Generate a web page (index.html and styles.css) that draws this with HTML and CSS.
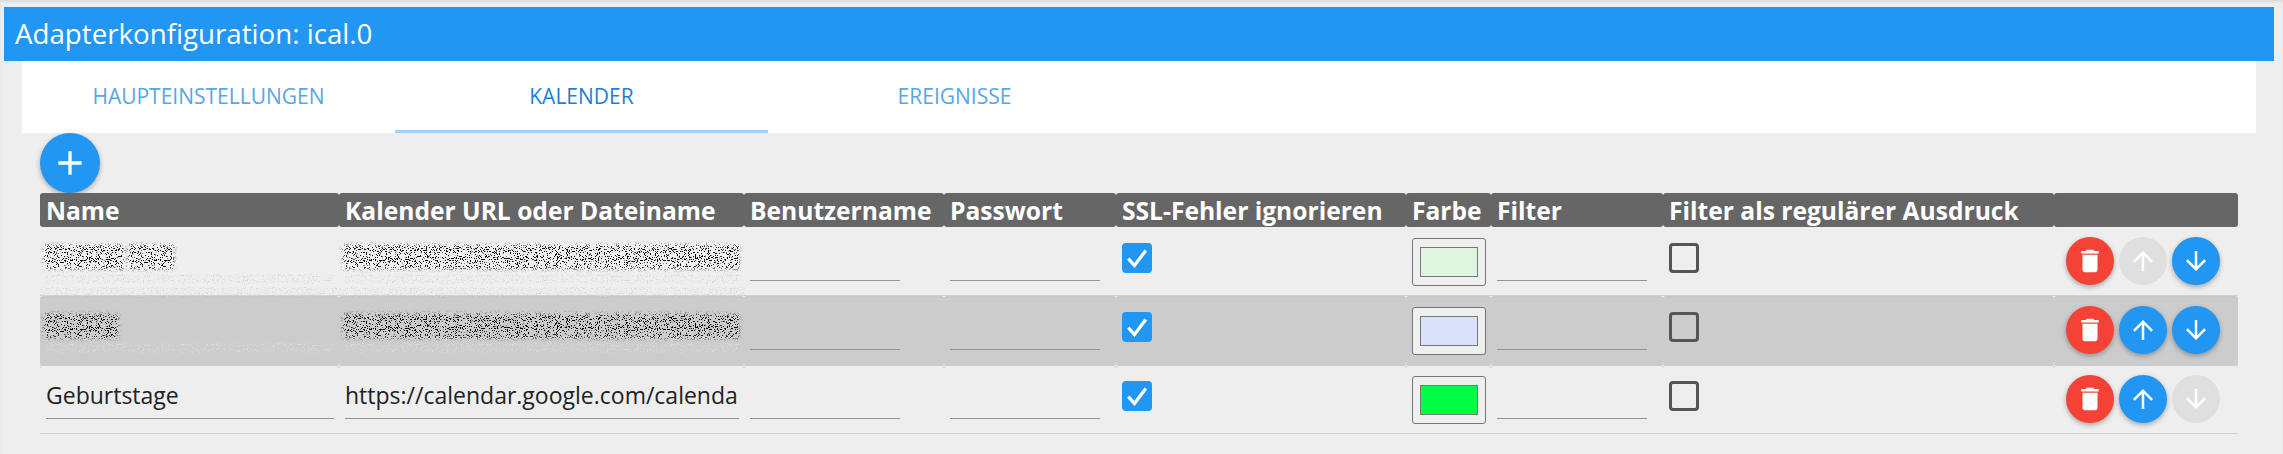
FILE: index.html
```html
<!DOCTYPE html>
<html lang="de">
<head>
  <meta charset="UTF-8">
  <title>Adapterkonfiguration: ical.0</title>
  <link rel="stylesheet" href="styles.css">
</head>
<body>
  <!-- speckle used for the censored cells -->
  <svg class="defs" width="0" height="0">
    <filter id="speckle" x="-5%" y="-20%" width="110%" height="140%">
      <feTurbulence type="fractalNoise" baseFrequency="0.9" numOctaves="2" seed="4" result="noise"/>
      <feColorMatrix in="noise" type="matrix" values="0 0 0 0 0  0 0 0 0 0  0 0 0 0 0  14 14 14 0 -23" result="dots"/>
      <feGaussianBlur in="SourceAlpha" stdDeviation="2" result="blob"/>
      <feComposite in="dots" in2="blob" operator="in"/>
    </filter>
    <filter id="speckle-light" x="-2%" y="-20%" width="104%" height="140%">
      <feTurbulence type="fractalNoise" baseFrequency="0.8" numOctaves="1" seed="9" result="noise"/>
      <feColorMatrix in="noise" type="matrix" values="0 0 0 0 0.7  0 0 0 0 0.7  0 0 0 0 0.7  5 5 5 0 -8" result="dots"/>
      <feComposite in="dots" in2="SourceAlpha" operator="in"/>
    </filter>
  </svg>

  <header class="title-bar">Adapterkonfiguration: ical.0</header>

  <nav class="tabs">
    <a class="tab">Haupteinstellungen</a>
    <a class="tab active">Kalender</a>
    <a class="tab">Ereignisse</a>
  </nav>

  <main class="content">
    <button class="fab add">
      <svg viewBox="0 0 24 24"><path d="M19 13h-6v6h-2v-6H5v-2h6V5h2v6h6v2z"/></svg>
    </button>

    <table class="calendars">
      <colgroup>
        <col class="c-name"><col class="c-url"><col class="c-user"><col class="c-pass"><col class="c-ssl">
        <col class="c-color"><col class="c-filter"><col class="c-regex"><col class="c-actions">
      </colgroup>
      <thead>
        <tr>
          <th>Name</th>
          <th>Kalender URL oder Dateiname</th>
          <th>Benutzername</th>
          <th>Passwort</th>
          <th>SSL-Fehler ignorieren</th>
          <th>Farbe</th>
          <th>Filter</th>
          <th>Filter als regulärer Ausdruck</th>
          <th></th>
        </tr>
      </thead>
      <tbody>
        <tr>
          <td><div class="field censored band"><span class="smudge w-name1a"></span><span class="smudge w-name1b"></span></div></td>
          <td><div class="field censored band"><span class="smudge w-url"></span></div></td>
          <td><div class="field short"></div></td>
          <td><div class="field short"></div></td>
          <td><span class="check on"><svg viewBox="0 0 24 24"><path d="M5 12.500l5 5.500 9-12"/></svg></span></td>
          <td><span class="color"><span class="swatch light-green"></span></span></td>
          <td><div class="field short"></div></td>
          <td><span class="check"></span></td>
          <td>
            <div class="actions">
              <button class="fab small red"><svg viewBox="0 0 24 24"><path d="M6 19c0 1.100.9 2 2 2h8c1.100 0 2-.9 2-2V7H6v12zM19 4h-3.500l-1-1h-5l-1 1H5v2h14V4z"/></svg></button>
              <button class="fab small off"><svg viewBox="0 0 24 24"><path d="M4 12l1.410 1.410L11 7.830V20h2V7.830l5.580 5.590L20 12l-8-8-8 8z"/></svg></button>
              <button class="fab small"><svg viewBox="0 0 24 24"><path d="M20 12l-1.410-1.410L13 16.170V4h-2v12.170l-5.580-5.590L4 12l8 8 8-8z"/></svg></button>
            </div>
          </td>
        </tr>
        <tr class="striped">
          <td><div class="field censored"><span class="smudge w-name2"></span></div></td>
          <td><div class="field censored"><span class="smudge w-url"></span></div></td>
          <td><div class="field short"></div></td>
          <td><div class="field short"></div></td>
          <td><span class="check on"><svg viewBox="0 0 24 24"><path d="M5 12.500l5 5.500 9-12"/></svg></span></td>
          <td><span class="color"><span class="swatch light-blue"></span></span></td>
          <td><div class="field short"></div></td>
          <td><span class="check"></span></td>
          <td>
            <div class="actions">
              <button class="fab small red"><svg viewBox="0 0 24 24"><path d="M6 19c0 1.100.9 2 2 2h8c1.100 0 2-.9 2-2V7H6v12zM19 4h-3.500l-1-1h-5l-1 1H5v2h14V4z"/></svg></button>
              <button class="fab small"><svg viewBox="0 0 24 24"><path d="M4 12l1.410 1.410L11 7.830V20h2V7.830l5.580 5.590L20 12l-8-8-8 8z"/></svg></button>
              <button class="fab small"><svg viewBox="0 0 24 24"><path d="M20 12l-1.410-1.410L13 16.170V4h-2v12.170l-5.580-5.590L4 12l8 8 8-8z"/></svg></button>
            </div>
          </td>
        </tr>
        <tr class="last">
          <td><div class="field">Geburtstage</div></td>
          <td><div class="field">https://calendar.google.com/calenda</div></td>
          <td><div class="field short"></div></td>
          <td><div class="field short"></div></td>
          <td><span class="check on"><svg viewBox="0 0 24 24"><path d="M5 12.500l5 5.500 9-12"/></svg></span></td>
          <td><span class="color"><span class="swatch green"></span></span></td>
          <td><div class="field short"></div></td>
          <td><span class="check"></span></td>
          <td>
            <div class="actions">
              <button class="fab small red"><svg viewBox="0 0 24 24"><path d="M6 19c0 1.100.9 2 2 2h8c1.100 0 2-.9 2-2V7H6v12zM19 4h-3.500l-1-1h-5l-1 1H5v2h14V4z"/></svg></button>
              <button class="fab small"><svg viewBox="0 0 24 24"><path d="M4 12l1.410 1.410L11 7.830V20h2V7.830l5.580 5.590L20 12l-8-8-8 8z"/></svg></button>
              <button class="fab small off"><svg viewBox="0 0 24 24"><path d="M20 12l-1.410-1.410L13 16.170V4h-2v12.170l-5.580-5.590L4 12l8 8 8-8z"/></svg></button>
            </div>
          </td>
        </tr>
      </tbody>
    </table>
  </main>
</body>
</html>
```

FILE: styles.css
```css
html, body {
  margin: 0; padding: 0;
  background: #eeeeee;
  font-family: "Open Sans", sans-serif;
  overflow: hidden;
}
body { padding-top: 7px; box-shadow: inset 0 2px 2px #ddd; height: 447px; }

.defs { position: absolute; }

.title-bar {
  margin: 0 9px 0 4px;
  height: 54px; line-height: 52px;
  padding-left: 11px;
  background: #2196f3; color: #fff;
  font-size: 27.7px;
}

.tabs {
  display: flex;
  margin: 0 27px 0 22px;
  height: 72px;
  background: #fff;
}
.tab {
  width: 373px;
  line-height: 70px;
  box-sizing: border-box;
  text-align: center;
  text-transform: uppercase;
  font-size: 21px;
  color: #5aa5e3;
}
.tab.active {
  color: #1e80d8;
  border-bottom: 3px solid #a9d0f2;
}

.content { padding: 0 45px 0 40px; }

.fab {
  display: flex; align-items: center; justify-content: center;
  flex: none;
  padding: 0; border: 0; border-radius: 50%;
  width: 60px; height: 60px;
  background: #2196f3;
  box-shadow: 0 2px 5px rgba(0,0,0,0.3);
}
.fab svg { width: 40px; height: 40px; fill: #fff; }
.fab.small { width: 48px; height: 48px; }
.fab.small svg { width: 30px; height: 30px; }
.fab.red { background: #f44336; }
.fab.off { background: #dfdfdf; box-shadow: none; }

.calendars {
  width: 2198px;
  table-layout: fixed;
  border-collapse: collapse;
  font-size: 23px;
  color: #222;
}
.c-name { width: 299px; }
.c-url { width: 405px; }
.c-user { width: 200px; }
.c-pass { width: 172px; }
.c-ssl { width: 290px; }
.c-color { width: 85px; }
.c-filter { width: 172px; }
.c-regex { width: 391px; }
.c-actions { width: 184px; }

.calendars th {
  height: 34px; padding: 0 0 0 6px;
  background: #666; color: #fff;
  border-radius: 3px;
  text-align: left;
  font-size: 24.6px; font-weight: 700;
  white-space: nowrap;
}
.calendars tbody tr { border-bottom: 1px solid rgba(0,0,0,0.12); }
.calendars tbody tr.striped { border-bottom-color: #ccc; }
.calendars td {
  height: 68px; padding: 0 0 0 6px;
  border-radius: 3px;
  vertical-align: top;
}
/* grey row sits one pixel lower than the cell box, darker line on top */
.striped td { background: linear-gradient(#c2c2c2 1px, #ccc 1px); }
.last td { box-shadow: inset 0 1px #ccc; }

.field {
  height: 54px; line-height: 60px;
  box-sizing: border-box;
  margin-right: 5px;
  border-bottom: 1px solid #949494;
  white-space: nowrap; overflow: hidden;
}
.field.short { width: 150px; margin-right: 0; }
.field.censored { position: relative; overflow: visible; border-bottom-color: transparent; }
.field.censored::after {
  content: "";
  position: absolute; left: 0; right: 0; bottom: -4px; height: 10px;
  background: #000;
  filter: url(#speckle-light);
}
/* faint band the censoring left above the grey row */
.field.band::before {
  content: "";
  position: absolute; left: -6px; right: -6px; top: 60px; height: 10px;
  background: #000;
  filter: url(#speckle-light);
}

/* censored text in the first two columns */
.smudge {
  position: absolute; top: 18px; height: 24px;
  background: #000;
  filter: url(#speckle);
}
.w-name1a { left: -2px; width: 80px; }
.w-name1b { left: 82px; width: 46px; }
.w-name2 { left: -2px; width: 74px; }
.w-url { left: -2px; width: 396px; }

.check {
  display: block;
  width: 30px; height: 30px;
  box-sizing: border-box;
  margin-top: 16px;
  border: 3px solid #555;
  border-radius: 4px;
}
.check.on { background: #2196f3; border: 0; }
.check svg { display: block; fill: none; stroke: #fff; stroke-width: 2.6; }

.color {
  display: flex; align-items: center; justify-content: center;
  width: 74px; height: 48px;
  box-sizing: border-box;
  margin-top: 11px;
  background: #efefef;
  border: 1px solid #767676; border-radius: 3px;
}
.swatch {
  width: 58px; height: 30px;
  box-sizing: border-box;
  border: 1px solid #777;
}
.light-green { background: #dff5df; }
.light-blue { background: #d9e2fa; }
.green { background: #00ff44; }

.actions { display: flex; gap: 5px; padding: 10px 0 0 6px; }
```
